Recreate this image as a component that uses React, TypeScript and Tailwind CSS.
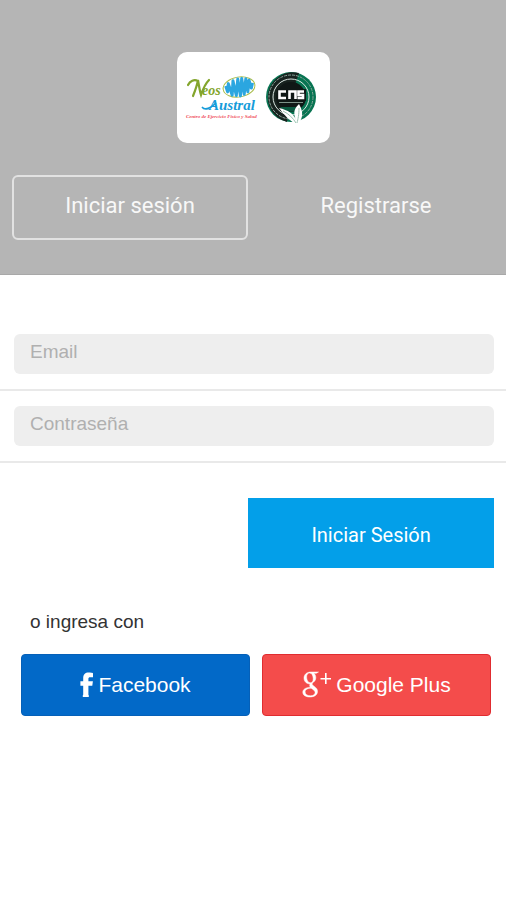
import { useState } from 'react';
import type { FormEvent } from 'react';

type Mode = 'login' | 'register';

function BrandLogo() {
  return (
    <svg viewBox="0 0 153 91" className="block w-full" role="img" aria-label="Neos Austral y CNS">
      {/* Neos Austral */}
      <g transform="rotate(-9 62 35)">
        <ellipse cx="62" cy="35" rx="16" ry="10" fill="#fff" stroke="#a9bd4a" strokeWidth="1" />
        <path
          d="M49 32l1 6 2-8 2 12 3-14 1 15 4-16 0 17 4-17 0 16 4-15 0 13 3-11 1 8 2-5"
          fill="none"
          stroke="#2ba6e0"
          strokeWidth="3"
          strokeLinejoin="round"
        />
      </g>
      <path
        d="M11 33C13 29 17 27 21 29M16 44C18 39 20 34 21 28C22 34 23 40 24 43C26 37 29 31 32 28"
        fill="none"
        stroke="#83a52c"
        strokeWidth="2.2"
        strokeLinecap="round"
      />
      <text x="25" y="43" fill="#83a52c" className="font-['Liberation_Serif',serif] text-[14px] font-bold italic">
        eos
      </text>
      <path d="M25 55C28 59 34 56 39 51" fill="none" stroke="#159bd9" strokeWidth="1.6" />
      <text x="32" y="58" fill="#159bd9" className="font-['Liberation_Serif',serif] text-[15px] font-bold italic">
        Austral
      </text>
      <text x="9" y="66" fill="#ef4a58" className="font-['Liberation_Serif',serif] text-[5px] font-bold italic">
        Centro de Ejercicio Físico y Salud
      </text>

      {/* CNS */}
      <circle cx="114" cy="45" r="25" fill="#087452" />
      <path d="M122 21A25 25 0 1 0 110 70L114 45Z" fill="#18231f" />
      <circle cx="114" cy="45" r="22" fill="none" stroke="#8ba89c" strokeWidth="1" strokeDasharray="3 1" />
      <circle cx="114" cy="45" r="18" fill="none" stroke="#dce8e2" strokeWidth="1" />
      <circle cx="114" cy="45" r="15" fill="#101816" />
      <path d="M103 55A15 15 0 0 0 125 55Z" fill="#0b5a41" />
      <path d="M100 37H129V49H100Z" fill="#101816" />
      <g fill="none" stroke="#fff" strokeWidth="2.6">
        <path d="M109 39.5H102.5V46H109" />
        <path d="M112.5 47V39.5H118.5V47" />
        <path d="M127 39.5H121.5V43H126V46H120.5" />
      </g>
      <path d="M102 50.5H126" stroke="#7d9288" strokeWidth="1" />
      <path
        d="M120 73C112 68 108 64 102 56C111 58 117 62 119 68C115 59 119 55 122 52C127 61 126 67 120 73Z"
        fill="#fff"
      />
      <path d="M106 59C112 62 116 66 119 71M122 56C122 63 121 67 120 71" fill="none" stroke="#9cc4b2" strokeWidth="1" />
    </svg>
  );
}

function FacebookIcon() {
  return (
    <svg viewBox="0 0 14 26" className="h-[26px] w-[14px] shrink-0" fill="currentColor" aria-hidden="true">
      <path d="M2.8 25V23.2L3.2 22.8V13.7H.4V9.3H3.2V6.5C3.2 2.6 5.1.6 8.8.6C10.5.6 12 .8 13 1.2V5.2H10.3C8.8 5.2 8.4 5.8 8.4 7.1V9.3H12.9L12.3 13.7H8.4V22.8L8.8 23.2V25Z" />
    </svg>
  );
}

function GooglePlusIcon() {
  return (
    <svg viewBox="0 0 30 28" className="h-7 w-[30px] shrink-0" fill="currentColor" aria-hidden="true">
      <path
        fillRule="evenodd"
        stroke="currentColor"
        strokeWidth="0.5"
        d="M16.5 1H9C4.5 1 2 3.7 2 7.1C2 10.6 4.6 12.9 8.1 12.9C7.4 14.2 7.6 15.2 8.5 16.2C3.9 16.4 .8 18.2 .8 21.2C.8 24.3 3.8 26 7.7 26C12.7 26 15.5 23.5 15.5 20.4C15.5 18 14.2 16.8 12 15.2C10.8 14.3 10.1 13.8 10.1 13.1C10.1 12.2 10.8 11.8 11.7 11C13 9.9 13.8 8.6 13.8 6.7C13.8 4.7 12.9 3.1 11.8 2.3H14.3ZM7.7 2C9.8 2 11.2 4.8 11.2 7.8C11.2 10.4 10.1 11.7 8.3 11.7C6 11.7 4.6 8.8 4.6 6C4.6 3.4 5.8 2 7.7 2ZM9.2 17.2C11.8 18.9 13.1 19.8 13.1 21.6C13.1 23.5 11.5 24.8 8.4 24.8C5.2 24.8 3.1 23.2 3.1 20.9C3.1 18.4 5.8 17.3 9.2 17.2Z"
      />
      <path d="M23 2H24.6V7H29V8.5H24.6V13H23V8.5H18.5V7H23Z" />
    </svg>
  );
}

export default function App() {
  const [mode, setMode] = useState<Mode>('login');
  const [email, setEmail] = useState('');
  const [password, setPassword] = useState('');

  const handleSubmit = (e: FormEvent) => {
    e.preventDefault();
  };

  const tabClass = (tab: Mode) =>
    `h-[65px] rounded-md border-2 pb-1 text-[22px] text-[#f8f8f8] ${
      mode === tab ? 'border-[#e2e2e2]' : 'border-transparent'
    }`;

  return (
    <div className="min-h-screen bg-white font-['Liberation_Sans',sans-serif]">
      {/* Header */}
      <header className="border-b border-[#a8a8a8] bg-[#b5b5b5] px-3 pt-13 pb-[34px]">
        <div className="mx-auto w-[153px] overflow-hidden rounded-[10px] bg-white">
          <BrandLogo />
        </div>
        <nav className="mt-8 grid grid-cols-2 gap-[10px] font-['Roboto',sans-serif]">
          <button type="button" onClick={() => setMode('login')} className={tabClass('login')}>
            Iniciar sesión
          </button>
          <button type="button" onClick={() => setMode('register')} className={tabClass('register')}>
            Registrarse
          </button>
        </nav>
      </header>

      <main>
        <form onSubmit={handleSubmit} className="pt-11">
          <div className="border-b-2 border-[#e9e9e9] py-[15px] pr-3 pl-[14px]">
            <input
              type="email"
              aria-label="Email"
              placeholder="Email"
              value={email}
              onChange={(e) => setEmail(e.target.value)}
              className="block h-10 w-full rounded-md bg-[#eeeeee] px-4 pb-1 text-[19px] text-[#333333] placeholder:text-[#b0b0b0]"
            />
          </div>
          <div className="border-b-2 border-[#e9e9e9] py-[15px] pr-3 pl-[14px]">
            <input
              type="password"
              aria-label="Contraseña"
              placeholder="Contraseña"
              value={password}
              onChange={(e) => setPassword(e.target.value)}
              className="block h-10 w-full rounded-md bg-[#eeeeee] px-4 pb-1 text-[19px] text-[#333333] placeholder:text-[#b0b0b0]"
            />
          </div>
          <div className="flex justify-end px-3 pt-[35px]">
            <button
              type="submit"
              className="h-[70px] w-[51%] bg-[#039fe9] pt-1 font-['Roboto',sans-serif] text-[20px] text-white"
            >
              Iniciar Sesión
            </button>
          </div>
        </form>

        {/* Social login */}
        <section className="pt-10">
          <p className="px-[30px] text-[19px] leading-7 text-[#333333]">o ingresa con</p>
          <div className="mt-[18px] grid grid-cols-2 gap-3 pr-[15px] pl-[21px]">
            <button
              type="button"
              className="flex h-[62px] items-center justify-center gap-1 rounded-sm border border-[#0560b8] bg-[#0269c8] text-[21px] text-white"
            >
              <FacebookIcon />
              Facebook
            </button>
            <button
              type="button"
              className="flex h-[62px] items-center justify-center gap-1 rounded-sm border border-[#e02c30] bg-[#f44c4b] text-[21px] text-white"
            >
              <GooglePlusIcon />
              Google Plus
            </button>
          </div>
        </section>
      </main>
    </div>
  );
}
